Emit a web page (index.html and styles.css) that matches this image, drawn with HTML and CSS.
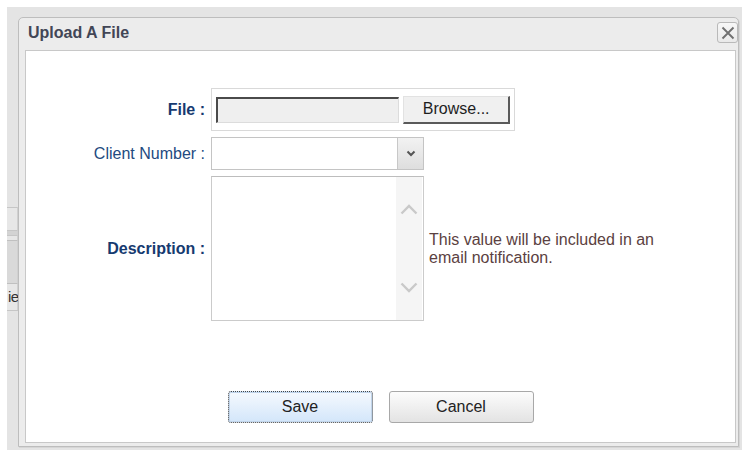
FILE: index.html
```html
<!DOCTYPE html>
<html lang="en">
<head>
<meta charset="utf-8">
<title>Upload A File</title>
<link rel="stylesheet" href="styles.css">
</head>
<body>
<div class="stage">
  <div class="backdrop">
    <div class="bd-fill"></div>
    <div class="bd-row bd-row-tall"></div>
    <div class="bd-row bd-bar"></div>
    <div class="bd-row bd-row-thin"></div>
    <div class="bd-row bd-btn"></div>
    <div class="bd-row bd-text">ie</div>
    <div class="bd-row bd-rest"></div>
  </div>

  <section class="dialog">
    <header class="dialog-title">
      <h1>Upload A File</h1>
      <button class="close" type="button" aria-label="Close">
        <svg width="14" height="14" viewBox="0 0 14 14"><path d="M1.5 1.5 L12.5 12.5 M12.5 1.5 L1.5 12.5" stroke="#707070" stroke-width="1.9" fill="none"/></svg>
      </button>
    </header>

    <div class="dialog-body">
      <form class="upload-form">
        <label class="lbl strong">File :</label>
        <div class="file-field">
          <span class="file-path"></span>
          <button class="browse" type="button">Browse...</button>
        </div>

        <label class="lbl">Client Number :</label>
        <div class="select">
          <span class="select-value"></span>
          <span class="select-arrow">
            <svg width="10" height="7" viewBox="0 0 10 7"><path d="M1.5 1.5 L5 5 L8.5 1.5" stroke="#555" stroke-width="2" fill="none"/></svg>
          </span>
        </div>

        <label class="lbl strong">Description :</label>
        <div class="desc-cell">
          <div class="textarea">
            <div class="scroll">
              <svg width="18" height="12" viewBox="0 0 18 12"><path d="M1.5 10.5 L9 3 L16.5 10.5" stroke="#c9c9c9" stroke-width="2.4" fill="none"/></svg>
              <svg width="18" height="12" viewBox="0 0 18 12"><path d="M1.5 1.5 L9 9 L16.5 1.5" stroke="#c9c9c9" stroke-width="2.4" fill="none"/></svg>
            </div>
          </div>
          <p class="note">This value will be included in an email notification.</p>
        </div>
      </form>

      <div class="actions">
        <button class="btn save" type="button">Save</button>
        <button class="btn cancel" type="button">Cancel</button>
      </div>
    </div>
  </section>
</div>
</body>
</html>
```

FILE: styles.css
```css
html, body {
  margin: 0;
  padding: 0;
  background: #ffffff;
}

body {
  font-family: "Liberation Sans", Arial, sans-serif;
  font-size: 16px;
  color: #222;
}

button {
  font-family: inherit;
}

/* grey page area behind the modal */
.stage {
  margin: 7px 0 0 7px;
  height: 443px;
  background: #e4e4e4;
  display: flex;
}

/* sliver of the underlying page visible left of the dialog */
.backdrop {
  width: 11px;
  flex: none;
  display: flex;
  flex-direction: column;
  overflow: hidden;
}

.bd-fill {
  height: 200px;
  flex: none;
}

.bd-row {
  flex: none;
  border-top: 1px solid #c6c6c6;
  border-right: 1px solid #d0d0d0;
  background: #e7e7e7;
}

.bd-row-tall { height: 22px; }
.bd-bar { height: 4px; background: #d3d3d3; }
.bd-row-thin { height: 4px; }
.bd-btn { height: 42px; background: #d9d9d9; border-top-color: #c0c0c0; }

.bd-text {
  height: 26px;
  line-height: 26px;
  padding-left: 1px;
  white-space: nowrap;
  color: #333;
  font-size: 15px;
  letter-spacing: -0.5px;
  border-top-color: #c0c0c0;
}

.bd-rest {
  flex: 1;
  background: #e4e4e4;
  border-right: 0;
}

/* dialog window */
.dialog {
  flex: 1;
  margin: 10px 3px 3px 0;
  border: 1px solid #bdbdbd;
  border-radius: 5px 5px 0 0;
  background: #ececec;
  display: flex;
  flex-direction: column;
  box-shadow: 1px 1px 0 #d6d6d6;
}

.dialog-title {
  height: 32px;
  flex: none;
  display: flex;
  align-items: flex-start;
  justify-content: space-between;
  padding: 0 0 0 9px;
}

.dialog-title h1 {
  margin: 0;
  font-size: 16px;
  line-height: 29px;
  font-weight: bold;
  color: #424656;
}

.close {
  width: 21px;
  height: 21px;
  margin-top: 4px;
  padding: 0;
  border: 1px solid #b9b9b9;
  border-radius: 3px;
  background: linear-gradient(#f7f7f7, #e9e9e9);
  display: flex;
  align-items: center;
  justify-content: center;
}

.dialog-body {
  flex: 1;
  margin: 0 2px 3px 6px;
  border: 1px solid #c8c8c8;
  background: #ffffff;
}

/* form grid: labels right-aligned against the controls */
.upload-form {
  margin: 0;
  padding-top: 37px;
  display: grid;
  grid-template-columns: 179px auto;
  column-gap: 6px;
  row-gap: 6px;
  align-items: center;
  justify-items: start;
}

.lbl {
  justify-self: end;
  text-align: right;
  line-height: 18px;
  color: #234a80;
}

.lbl.strong {
  font-weight: bold;
  color: #163a70;
}

.file-field {
  box-sizing: border-box;
  width: 304px;
  height: 43px;
  border: 1px solid #d9d9d9;
  background: #fff;
  padding: 0 4px;
  display: flex;
  align-items: center;
  gap: 4px;
}

.file-path {
  box-sizing: border-box;
  width: 184px;
  height: 26px;
  background: #efefef;
  border-top: 2px solid #4a4a4a;
  border-left: 2px solid #4a4a4a;
  border-right: 1px solid #dcdcdc;
  border-bottom: 1px solid #dcdcdc;
}

.browse {
  box-sizing: border-box;
  width: 107px;
  height: 28px;
  padding: 0;
  font-size: 16px;
  color: #1e1e1e;
  background: #f0f0f0;
  border-top: 1px solid #e2e2e2;
  border-left: 1px solid #e2e2e2;
  border-right: 2px solid #5a5a5a;
  border-bottom: 2px solid #5a5a5a;
}

.select {
  box-sizing: border-box;
  width: 213px;
  height: 33px;
  border: 1px solid #c4c4c4;
  display: flex;
}

.select-value {
  flex: 1;
}

.select-arrow {
  width: 25px;
  border-left: 1px solid #c8c8c8;
  background: linear-gradient(#f2f2f2, #dedede);
  display: flex;
  align-items: center;
  justify-content: center;
}

.desc-cell {
  display: flex;
  align-items: center;
  gap: 5px;
}

.textarea {
  box-sizing: border-box;
  width: 213px;
  height: 145px;
  border: 1px solid #cbcbcb;
  border-top-color: #bdbdbd;
  display: flex;
  justify-content: flex-end;
}

.scroll {
  width: 26px;
  margin-right: 1px;
  background: #f5f5f5;
  display: flex;
  flex-direction: column;
  align-items: center;
  justify-content: space-between;
  padding: 26px 0 26px;
}

.note {
  margin: 0;
  max-width: 240px;
  line-height: 18px;
  color: #5b4141;
}

.actions {
  display: flex;
  justify-content: center;
  gap: 16px;
  margin-top: 70px;
}

.btn {
  box-sizing: border-box;
  width: 145px;
  height: 32px;
  padding: 0;
  font-size: 16px;
  color: #222;
  border-radius: 3px;
}

.btn.save {
  border: 1px dotted #444;
  background: linear-gradient(#f5f9fe, #d3e6fa);
  box-shadow: inset 0 0 0 1px #c0d4ea;
}

.btn.cancel {
  border: 1px solid #a8a8a8;
  background: linear-gradient(#fcfcfc, #e3e3e3);
}
```
